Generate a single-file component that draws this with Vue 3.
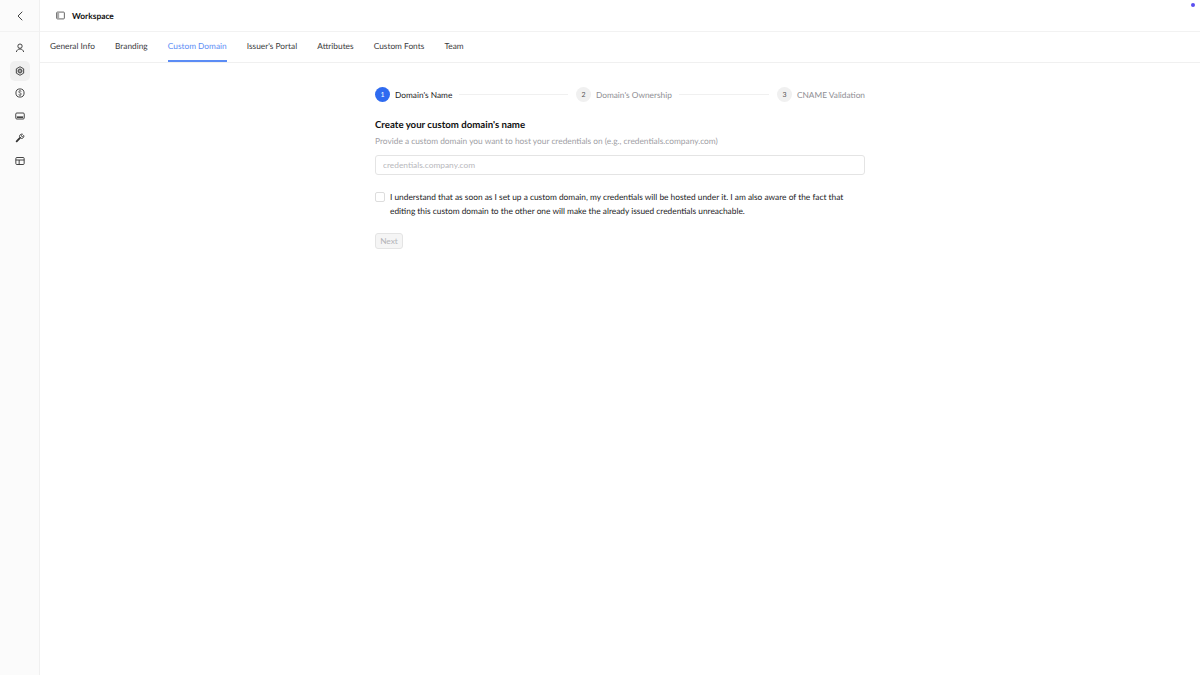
<template>
    <div class="app">
        <span class="status-dot"></span>
        <aside class="sidebar">
            <div class="back">
                <svg width="10" height="10" viewBox="0 0 10 10" fill="none" stroke="#444" stroke-width="1" stroke-linecap="round" stroke-linejoin="round"><path d="M7 1 3 5l4 4"/></svg>
            </div>
            <nav class="side-nav">
                <div class="side-item">
                    <svg class="ico" viewBox="0 0 12 12"><circle cx="6" cy="3.800" r="2.600"/><path d="M1.600 10.800C2 8.600 3.800 7.200 6 7.200s4 1.400 4.400 3.600"/></svg>
                </div>
                <div class="side-item active">
                    <svg class="ico" viewBox="0 0 12 12"><path d="M6 .9 10.400 3.400v5.200L6 11.100 1.600 8.600V3.400z"/><circle cx="6" cy="6" r="1.700"/><path d="M3.600 4.600 6 3.200l2.400 1.400v2.800L6 8.800 3.600 7.400z" stroke-width=".7"/></svg>
                </div>
                <div class="side-item">
                    <svg class="ico" viewBox="0 0 12 12"><circle cx="6" cy="6" r="4.900"/><path d="M7.500 4.400C7.200 3.800 6.700 3.500 6 3.500c-.9 0-1.600.4-1.600 1.200C4.400 6.300 7.600 5.500 7.600 7.200c0 .8-.8 1.300-1.600 1.300-.8 0-1.400-.3-1.700-.9M6 2.500v1M6 8.500v1" stroke-width=".9"/></svg>
                </div>
                <div class="side-item">
                    <svg class="ico" viewBox="0 0 12 12"><rect x=".9" y="2.400" width="10.200" height="7.200" rx="1.300"/><path d="M2.200 7.400h7.600" stroke-width="1.800"/></svg>
                </div>
                <div class="side-item">
                    <svg class="ico" viewBox="0 0 12 12"><path d="M2 10 6 5.900" stroke-width="2.200" stroke-linecap="round"/><path d="M5.400 4.300A2.700 2.700 0 0 1 9 1.500L7.300 3.200l1.500 1.500 1.700-1.700a2.700 2.700 0 0 1-2.900 3.500z"/></svg>
                </div>
                <div class="side-item">
                    <svg class="ico" viewBox="0 0 12 12"><rect x="1" y="1.800" width="10" height="8.400" rx="1.200"/><path d="M1 4.800h10M5 4.800v5.400"/></svg>
                </div>
            </nav>
        </aside>

        <main class="content">
            <header class="topbar">
                <svg width="9" height="9" viewBox="0 0 10 10" fill="none" stroke="#555" stroke-width="1"><rect x=".7" y="1.200" width="8.600" height="7.600" rx="1"/><rect x="1.200" y="1.700" width="2.300" height="6.600" fill="#aaa" stroke="none"/></svg>
                <span class="title">Workspace</span>
            </header>

            <div class="tabs">
                <a v-for="tab in tabs" :key="tab" class="tab" :class="{ current: tab === 'Custom Domain' }">{{ tab }}</a>
            </div>

            <section class="wizard">
                <div class="steps">
                    <div v-for="(step, i) in steps" :key="step" class="step" :class="{ on: i === 0 }">
                        <span class="num">{{ i + 1 }}</span>
                        <span class="step-name">{{ step }}</span>
                        <div v-if="i < steps.length - 1" class="line"></div>
                    </div>
                </div>

                <h2 class="heading">Create your custom domain's name</h2>
                <p class="hint">Provide a custom domain you want to host your credentials on (e.g., credentials.company.com)</p>
                <input class="field" type="text" placeholder="credentials.company.com" />

                <label class="agree">
                    <span class="box"></span>
                    <span>I understand that as soon as I set up a custom domain, my credentials will be hosted under it. I am also aware of the fact that editing this custom domain to the other one will make the already issued credentials unreachable.</span>
                </label>

                <button class="next" disabled>Next</button>
            </section>
        </main>
    </div>
</template>

<script setup>
const tabs = ['General Info', 'Branding', 'Custom Domain', "Issuer's Portal", 'Attributes', 'Custom Fonts', 'Team']
const steps = ["Domain's Name", "Domain's Ownership", 'CNAME Validation']
</script>

<style scoped>
.app {
    display: flex;
    height: 675px;
    width: 1200px;
    overflow: hidden;
    position: relative;
    background: #fff;
    font-family: "Lato", sans-serif;
    text-rendering: geometricPrecision;
    color: #1c1c1e;
}

.status-dot {
    position: absolute;
    top: 3px;
    right: 5px;
    width: 4px;
    height: 4px;
    border-radius: 50%;
    background: #5a4ff0;
}

.sidebar {
    width: 39px;
    flex-shrink: 0;
    background: #fbfbfb;
    border-right: 1px solid #f0f0f0;
}

.back {
    height: 32px;
    display: flex;
    align-items: center;
    justify-content: center;
    border-bottom: 1px solid #f2f2f2;
    box-sizing: border-box;
}

.side-nav {
    display: flex;
    flex-direction: column;
    align-items: center;
    padding-top: 6px;
    gap: 2.600px;
}

.side-item {
    width: 20px;
    height: 20px;
    display: flex;
    align-items: center;
    justify-content: center;
    border-radius: 5px;
}

.side-item.active {
    background: #f0f0f0;
}

.ico {
    width: 10px;
    height: 10px;
    fill: none;
    stroke: #333;
    stroke-width: 1.1;
}

.content {
    flex: 1;
    min-width: 0;
}

.topbar {
    height: 32px;
    box-sizing: border-box;
    display: flex;
    align-items: center;
    gap: 7px;
    padding-left: 16px;
    border-bottom: 1px solid #f2f2f2;
}

.title {
    font-size: 8.400px;
    font-weight: 700;
    color: #111;
}

.tabs {
    height: 31px;
    box-sizing: border-box;
    display: flex;
    gap: 20.200px;
    padding-left: 10px;
    border-bottom: 1px solid #f0f0f0;
}

.tab {
    font-size: 8.300px;
    line-height: 29px;
    color: #3a3a3c;
    height: 30px;
    box-sizing: border-box;
}

.tab.current {
    color: #5b8cf5;
    border-bottom: 2px solid #5b8cf5;
}

.wizard {
    width: 490px;
    margin-left: 335px;
    padding-top: 24px;
}

.steps {
    display: flex;
    align-items: center;
    height: 15px;
}

.step {
    flex: 1 1 0;
    display: flex;
    align-items: center;
    gap: 5px;
    font-size: 8.300px;
    color: #8e8e93;
}

.step:last-child {
    flex: none;
}

.step.on {
    color: #1c1c1e;
}

.num {
    width: 15px;
    height: 15px;
    border-radius: 50%;
    background: #f0f0f0;
    color: #555;
    font-size: 7px;
    display: flex;
    align-items: center;
    justify-content: center;
}

.step.on .num {
    background: #2f6bf0;
    color: #fff;
}

.line {
    flex: 1;
    height: 1px;
    background: #f0f0f0;
    margin: 0 8px 0 2px;
}

.heading {
    margin: 16px 0 0;
    font-size: 9.660px;
    line-height: 15px;
    font-weight: 700;
    color: #111;
}

.hint {
    margin: 1px 0 0;
    font-size: 8.350px;
    line-height: 14px;
    color: #a0a0a5;
}

.field {
    display: block;
    width: 100%;
    height: 20px;
    margin-top: 7px;
    box-sizing: border-box;
    border: 1px solid #e4e4e4;
    border-radius: 3px;
    padding: 0 7px;
    font-family: inherit;
    font-size: 8.350px;
    outline: none;
}

.field::placeholder {
    color: #b8b8bc;
}

.agree {
    display: flex;
    gap: 5px;
    margin-top: 15px;
    font-size: 8.350px;
    line-height: 14px;
    color: #1c1c1e;
}

.box {
    width: 10px;
    height: 10px;
    flex-shrink: 0;
    box-sizing: border-box;
    border: 1px solid #ddd;
    border-radius: 2px;
    margin-top: 2px;
}

.next {
    display: block;
    margin-top: 15px;
    width: 28px;
    height: 16px;
    padding: 0;
    background: #f5f5f5;
    border: 1px solid #e4e4e4;
    border-radius: 3px;
    font-family: inherit;
    font-size: 8.350px;
    color: #b4b4b8;
}
</style>
